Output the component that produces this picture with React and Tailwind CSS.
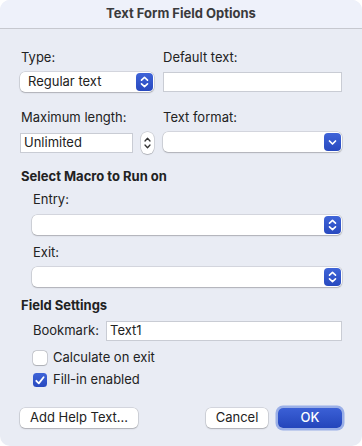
import React from "react";

const UpDown = () => (
  <svg width="9" height="12" viewBox="0 0 9 12" fill="none" stroke="white" strokeWidth="1.6" strokeLinecap="round" strokeLinejoin="round">
    <path d="M1.5 4.2 L4.5 1.4 L7.5 4.2" />
    <path d="M1.5 7.8 L4.5 10.6 L7.5 7.8" />
  </svg>
);

const Down = () => (
  <svg width="9" height="7" viewBox="0 0 9 7" fill="none" stroke="white" strokeWidth="1.7" strokeLinecap="round" strokeLinejoin="round">
    <path d="M1.5 2 L4.5 5 L7.5 2" />
  </svg>
);

const Popup = ({ value, className = "", arrow = "updown" }) => (
  <div className={`h-5 flex items-center justify-between bg-white rounded-[5px] shadow-[0_0_0_0.5px_rgba(0,0,0,0.18),0_1px_1.5px_rgba(0,0,0,0.18)] pl-[8px] pr-[1px] ${className}`}>
    <span className="text-[13px] text-[#222]">{value}</span>
    <div className="w-[17px] h-[18px] rounded-[4px] bg-gradient-to-b from-[#3f64d8] to-[#2849bf] flex items-center justify-center">
      {arrow === "updown" ? <UpDown /> : <Down />}
    </div>
  </div>
);

const Input = ({ value, className = "" }) => (
  <div className={`h-5 bg-white border border-[#c9ccd4] flex items-center pl-[3px] text-[13px] text-[#222] ${className}`}>
    {value}
  </div>
);

const Checkbox = ({ checked, label }) => (
  <div className="flex items-center h-4">
    {checked ? (
      <div className="w-[14px] h-[14px] rounded-[3.5px] bg-gradient-to-b from-[#3f64d8] to-[#2849bf] flex items-center justify-center">
        <svg width="10" height="9" viewBox="0 0 10 9" fill="none" stroke="white" strokeWidth="1.8" strokeLinecap="round" strokeLinejoin="round">
          <path d="M1.3 4.8 L3.8 7.4 L8.6 1.3" />
        </svg>
      </div>
    ) : (
      <div className="w-[14px] h-[14px] rounded-[3.5px] bg-white shadow-[0_0_0_0.5px_rgba(0,0,0,0.25),0_0.5px_1px_rgba(0,0,0,0.15)]" />
    )}
    <span className="ml-[6px] text-[13px] text-[#222]">{label}</span>
  </div>
);

const Button = ({ children, className = "" }) => (
  <div className={`h-5 bg-white rounded-[5px] shadow-[0_0_0_0.5px_rgba(0,0,0,0.18),0_1px_1.5px_rgba(0,0,0,0.18)] flex items-center justify-center text-[13px] text-[#222] ${className}`}>
    {children}
  </div>
);

export default function App() {
  return (
    <div className="w-[362px] h-[446px] bg-white" style={{ fontFamily: "Inter, 'Liberation Sans', sans-serif" }}>
      <div className="w-[362px] h-[446px] rounded-[10px] overflow-hidden bg-[#e9ecf4] flex flex-col">
        {/* title bar */}
        <div className="h-[29px] bg-[#eef1fa] border-b border-[#c6c8cf] flex items-center justify-center">
          <span className="text-[13px] font-bold text-[#3a3a3c]">Text Form Field Options</span>
        </div>

        <div className="px-5 pt-5 flex flex-col">
          {/* type / default text */}
          <div className="flex gap-[9px]">
            <div className="w-[134px] flex flex-col">
              <span className="text-[13px] leading-4 text-[#222] pl-[1px]">Type:</span>
              <Popup value="Regular text" className="mt-[7px]" />
            </div>
            <div className="flex-1 flex flex-col">
              <span className="text-[13px] leading-4 text-[#222]">Default text:</span>
              <Input className="mt-[7px]" />
            </div>
          </div>

          {/* max length / format */}
          <div className="flex gap-[9px] mt-[17px]">
            <div className="w-[134px] flex flex-col">
              <span className="text-[13px] leading-4 text-[#222] pl-[1px]">Maximum length:</span>
              <div className="mt-[7px] flex items-center">
                <Input value="Unlimited" className="w-[114px]" />
                <div className="ml-[8px] w-[13px] h-[22px] bg-white rounded-[6px] shadow-[0_0_0_0.5px_rgba(0,0,0,0.2),0_1px_1px_rgba(0,0,0,0.15)] flex flex-col items-center justify-center gap-[2px]">
                  <svg width="7" height="5" viewBox="0 0 7 5" fill="none" stroke="#333" strokeWidth="1.3" strokeLinecap="round" strokeLinejoin="round"><path d="M1 4 L3.5 1.3 L6 4" /></svg>
                  <svg width="7" height="5" viewBox="0 0 7 5" fill="none" stroke="#333" strokeWidth="1.3" strokeLinecap="round" strokeLinejoin="round"><path d="M1 1 L3.5 3.7 L6 1" /></svg>
                </div>
              </div>
            </div>
            <div className="flex-1 flex flex-col">
              <span className="text-[13px] leading-4 text-[#222]">Text format:</span>
              <Popup value="" arrow="down" className="mt-[7px]" />
            </div>
          </div>

          {/* macro */}
          <span className="mt-[14px] text-[13px] leading-4 font-bold text-[#222] pl-[1px]">Select Macro to Run on</span>
          <div className="pl-3 flex flex-col">
            <span className="mt-[7px] text-[13px] leading-4 text-[#222] pl-[1px]">Entry:</span>
            <Popup value="" className="mt-[8px]" />
            <span className="mt-[9px] text-[13px] leading-4 text-[#222] pl-[1px]">Exit:</span>
            <Popup value="" className="mt-[7px]" />
          </div>

          {/* field settings */}
          <span className="mt-[10px] text-[13px] leading-4 font-bold text-[#222] pl-[1px]">Field Settings</span>
          <div className="pl-[13px] flex flex-col">
            <div className="mt-[8px] flex items-center">
              <span className="w-[73px] text-[13px] text-[#222]">Bookmark:</span>
              <Input value="Text1" className="flex-1" />
            </div>
            <div className="mt-[9px]">
              <Checkbox label="Calculate on exit" />
            </div>
            <div className="mt-[6px]">
              <Checkbox checked label="Fill-in enabled" />
            </div>
          </div>

          {/* buttons */}
          <div className="mt-[20px] flex items-center">
            <Button className="w-[118px]">Add Help Text...</Button>
            <div className="flex-1" />
            <Button className="w-[62px]">Cancel</Button>
            <div className="ml-[10px] h-5 w-[64px] rounded-[5px] bg-gradient-to-b from-[#3b60d6] to-[#2445bb] shadow-[0_0_0_2.5px_rgba(90,125,220,0.55)] flex items-center justify-center text-[13px] font-medium text-white">
              OK
            </div>
          </div>
        </div>
      </div>
    </div>
  );
}
